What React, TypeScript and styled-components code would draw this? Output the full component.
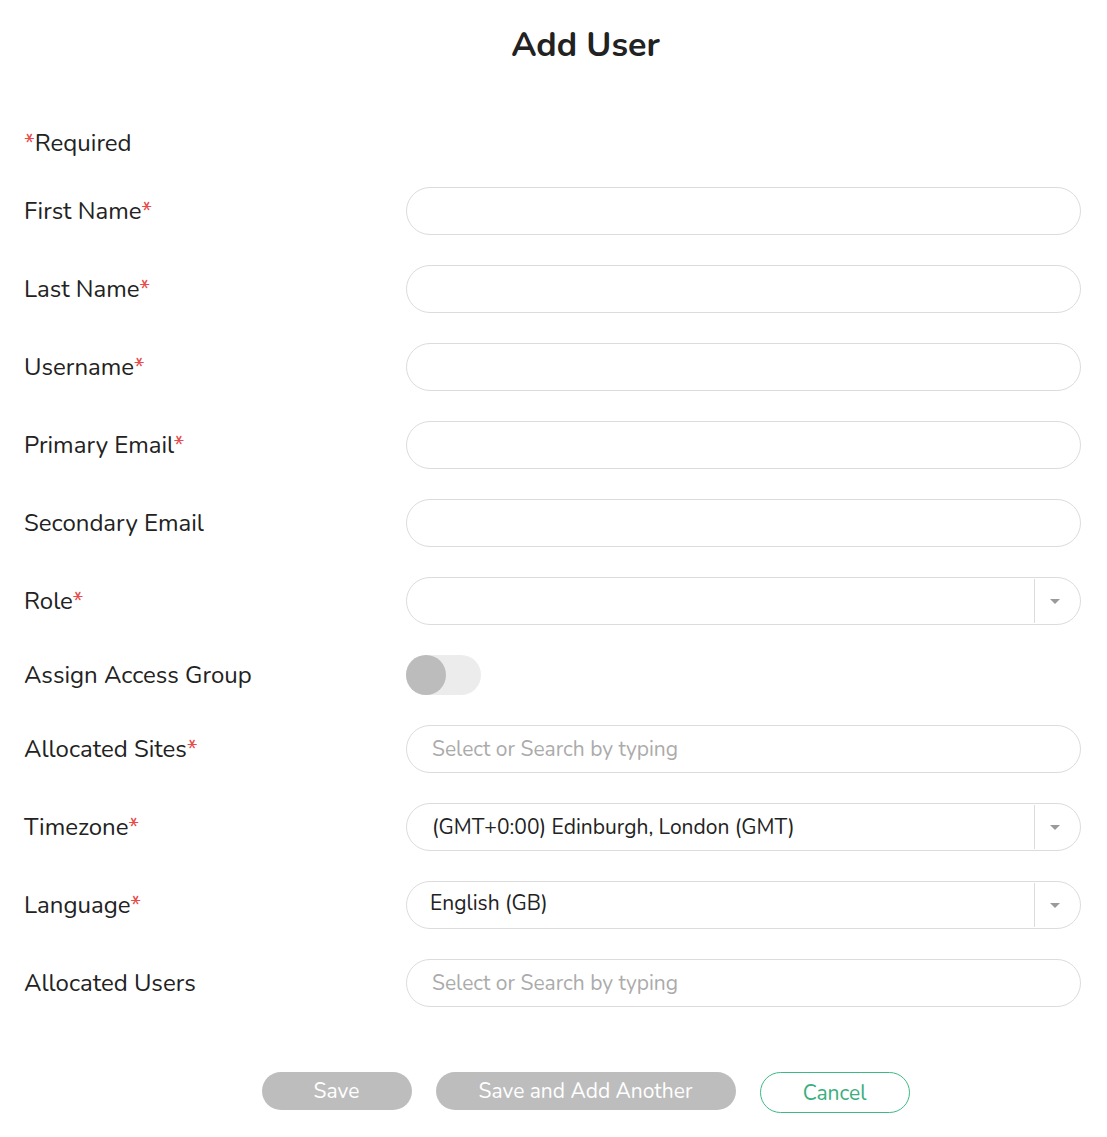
import React from 'react';
import styled, {createGlobalStyle} from 'styled-components';

const GlobalStyle = createGlobalStyle`
    body {
        margin: 0;
        background: #ffffff;
        font-family: "Nunito", "Lato", "Open Sans", sans-serif;
        color: #222222;
    }
`

type Field = {
    label: string;
    required?: boolean;
    kind: 'text' | 'select' | 'toggle' | 'search';
    value?: string;
    tight?: boolean;
}

const fields: Field[] = [
    {label: 'First Name', required: true, kind: 'text'},
    {label: 'Last Name', required: true, kind: 'text'},
    {label: 'Username', required: true, kind: 'text'},
    {label: 'Primary Email', required: true, kind: 'text'},
    {label: 'Secondary Email', kind: 'text'},
    {label: 'Role', required: true, kind: 'select'},
    {label: 'Assign Access Group', kind: 'toggle'},
    {label: 'Allocated Sites', required: true, kind: 'search'},
    {label: 'Timezone', required: true, kind: 'select', value: '(GMT+0:00) Edinburgh, London (GMT)'},
    {label: 'Language', required: true, kind: 'select', value: 'English (GB)', tight: true},
    {label: 'Allocated Users', kind: 'search'},
];

const renderControl = (field: Field) => {
    switch (field.kind) {
        case 'toggle':
            return (
                <Toggle>
                    <Knob/>
                </Toggle>
            );
        case 'search':
            return <Input placeholder="Select or Search by typing"/>;
        case 'select':
            return (
                <Select>
                    <SelectValue tight={field.tight}>{field.value}</SelectValue>
                    <SelectArrow>
                        <Caret/>
                    </SelectArrow>
                </Select>
            );
        default:
            return <Input/>;
    }
};

export default function App() {
    return (
        <Page>
            <GlobalStyle/>
            <Title>Add User</Title>
            <RequiredNote><Star>*</Star>Required</RequiredNote>
            <Form>
                {fields.map(field => (
                    <Row key={field.label}>
                        <Label>
                            {field.label}
                            {field.required && <Star>*</Star>}
                        </Label>
                        {renderControl(field)}
                    </Row>
                ))}
            </Form>
            <Actions>
                <Button width={150}>Save</Button>
                <Button width={300}>Save and Add Another</Button>
                <OutlineButton>Cancel</OutlineButton>
            </Actions>
        </Page>
    );
}

const Page = styled.div`
    padding: 22px 26px 20px 24px;
`

const Title = styled.h1`
    margin: 0;
    padding-left: 66px;
    text-align: center;
    font-size: 34px;
    font-weight: 700;
    line-height: 46px;
    color: #222222;
`

const RequiredNote = styled.div`
    margin-top: 60px;
    font-size: 24px;
    line-height: 30px;
`

const Star = styled.span`
    color: #e84a4a;
`

const Form = styled.div`
    margin-top: 29px;
    display: flex;
    flex-direction: column;
    gap: 30.05px;
`

const Row = styled.div`
    display: grid;
    grid-template-columns: 382px 1fr;
    align-items: center;
`

const Label = styled.div`
    font-size: 24px;
    line-height: 30px;
    color: #222222;
`

const Input = styled.input`
    box-sizing: border-box;
    width: 100%;
    height: 48px;
    border: 1px solid #dcdcdc;
    border-radius: 24px;
    padding: 0 25px;
    font-family: inherit;
    font-size: 21px;
    color: #222222;
    outline: none;
    background: #ffffff;

    &::placeholder {
        color: #ababab;
    }
`

const Select = styled.div`
    box-sizing: border-box;
    height: 48px;
    border: 1px solid #dcdcdc;
    border-radius: 24px;
    display: flex;
    align-items: stretch;
`

const SelectValue = styled.div<{ tight?: boolean }>`
    flex: 1;
    display: flex;
    align-items: center;
    padding-left: ${props => props.tight ? 23 : 25}px;
    padding-bottom: ${props => props.tight ? 4 : 0}px;
    font-size: 21px;
    color: #222222;
`

const SelectArrow = styled.div`
    width: 45px;
    margin: 1px 0;
    border-left: 1px solid #dcdcdc;
    display: flex;
    align-items: center;
    justify-content: center;
`

const Caret = styled.span`
    width: 0;
    height: 0;
    border-left: 5px solid transparent;
    border-right: 5px solid transparent;
    border-top: 5px solid #9a9a9a;
    margin-right: 6px;
`

const Toggle = styled.div`
    width: 75px;
    height: 40px;
    border-radius: 20px;
    background: #ececec;
    display: flex;
    align-items: center;
`

const Knob = styled.div`
    width: 40px;
    height: 40px;
    border-radius: 50%;
    background: #bcbcbc;
`

const Actions = styled.div`
    margin-top: 65px;
    padding-left: 66px;
    display: flex;
    justify-content: center;
    align-items: flex-start;
    gap: 24px;
`

const Button = styled.button<{ width: number }>`
    width: ${props => props.width}px;
    height: 38px;
    border: none;
    border-radius: 19px;
    background: #bdbdbd;
    color: #ffffff;
    font-family: inherit;
    font-size: 21px;
`

const OutlineButton = styled.button`
    width: 150px;
    height: 41px;
    border: 1px solid #3dba84;
    border-radius: 21px;
    background: #ffffff;
    color: #3aae7c;
    font-family: inherit;
    font-size: 21px;
`
